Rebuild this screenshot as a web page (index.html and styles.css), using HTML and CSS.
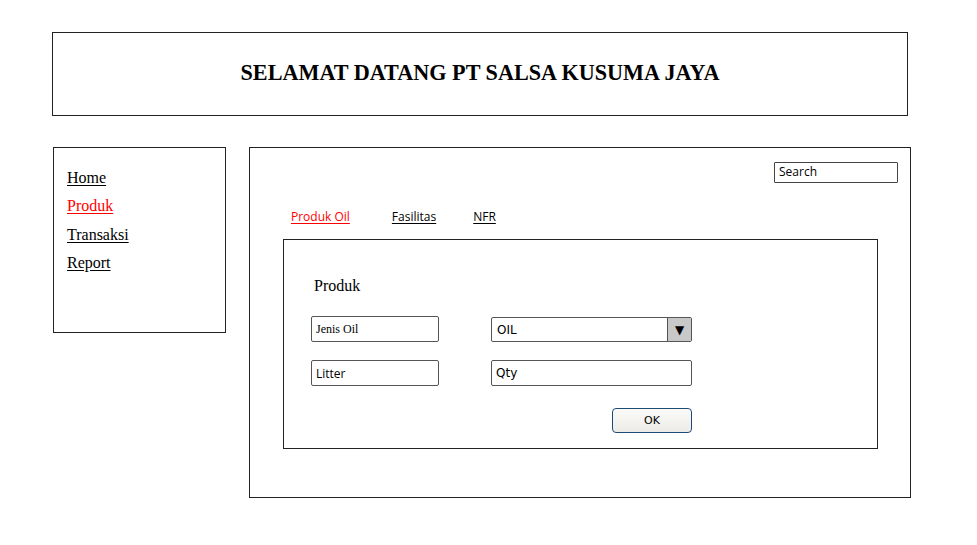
FILE: index.html
```html
<!DOCTYPE html>
<html>
<head>
<meta charset="utf-8">
<link rel="stylesheet" href="styles.css">
</head>
<body>
<div class="page">
  <header class="banner">
    <h1>SELAMAT DATANG PT SALSA KUSUMA JAYA</h1>
  </header>
  <div class="row">
    <nav class="sidebar">
      <a href="#" class="nav-link">Home</a>
      <a href="#" class="nav-link active">Produk</a>
      <a href="#" class="nav-link">Transaksi</a>
      <a href="#" class="nav-link">Report</a>
    </nav>
    <main class="main">
      <div class="search-row">
        <div class="search">Search</div>
      </div>
      <div class="tabs">
        <a href="#" class="tab active">Produk Oil</a>
        <a href="#" class="tab">Fasilitas</a>
        <a href="#" class="tab">NFR</a>
      </div>
      <section class="panel">
        <h2 class="panel-title">Produk</h2>
        <div class="form">
          <div class="field serif">Jenis Oil</div>
          <div class="combo">
            <span class="combo-text">OIL</span>
            <span class="combo-btn">&#9660;</span>
          </div>
          <div class="field sketch">Litter</div>
          <div class="field sys">Qty</div>
          <div class="spacer"></div>
          <div class="btn-cell"><button class="ok">OK</button></div>
        </div>
      </section>
    </main>
  </div>
</div>
</body>
</html>
```

FILE: styles.css
```css
* { box-sizing: border-box; }
html, body { margin: 0; padding: 0; background: #fff; }
body { width: 977px; height: 545px; overflow: hidden; }

.page { padding: 32px 0 0 52px; }

.banner {
  width: 856px;
  height: 84px;
  border: 1px solid #222;
  display: flex;
  align-items: center;
  justify-content: center;
}
.banner h1 {
  margin: 0 0 2px 0;
  font-family: "Liberation Serif", serif;
  font-weight: bold;
  font-size: 22.2px;
  color: #000;
}

.row {
  display: flex;
  align-items: flex-start;
  margin-top: 31px;
  gap: 23px;
}

.sidebar {
  margin-left: 1px;
  width: 173px;
  height: 186px;
  border: 1px solid #222;
  padding: 16px 0 0 13px;
  display: flex;
  flex-direction: column;
  align-items: flex-start;
}
.nav-link {
  font-family: "Liberation Serif", serif;
  font-size: 16px;
  line-height: 28.3px;
  color: #000;
  text-decoration: underline;
  text-underline-offset: 2px;
}
.nav-link.active { color: #f00; }

.main {
  width: 662px;
  height: 351px;
  border: 1px solid #222;
  padding: 14px 12px 0 33px;
}
.search-row { display: flex; justify-content: flex-end; }
.search {
  width: 124px;
  height: 21px;
  border: 1.5px solid #444;
  border-radius: 1px;
  font-family: "Open Sans", sans-serif;
  font-size: 12px;
  line-height: 17px;
  padding-left: 4px;
  color: #000;
}

.tabs {
  display: flex;
  margin-top: 22px;
  padding-left: 8px;
  height: 23px;
  align-items: center;
}
.tab {
  font-family: "Open Sans", sans-serif;
  font-size: 12px;
  color: #000;
  text-decoration: underline;
  text-underline-offset: 2px;
  margin-right: 42px;
}
.tab:nth-child(2) { margin-right: 37px; }
.tab.active { color: #f00; }

.panel {
  margin-top: 11px;
  width: 595px;
  height: 210px;
  border: 1px solid #222;
  padding: 36px 0 0 27px;
}
.panel-title {
  margin: 0 0 20px 3px;
  font-family: "Liberation Serif", serif;
  font-weight: normal;
  font-size: 16px;
  line-height: 20px;
  color: #000;
}

.form {
  display: grid;
  grid-template-columns: 128px 201px;
  column-gap: 52px;
  grid-template-rows: 26px 26px 29px;
  row-gap: 18px;
}
.field {
  border: 1.5px solid #555;
  border-radius: 2px;
  display: flex;
  align-items: center;
  padding-left: 4px;
  color: #000;
}
.field.serif { font-family: "Liberation Serif", serif; font-size: 12px; }
.field.sketch { font-family: "Open Sans", sans-serif; font-size: 12px; }
.field.sys { font-family: "DejaVu Sans", sans-serif; font-size: 12px; }

.combo {
  border: 1.5px solid #555;
  border-radius: 2px;
  display: flex;
  align-items: stretch;
  margin-top: 1px;
  height: 25px;
}
.combo-text {
  flex: 1;
  display: flex;
  align-items: center;
  padding-left: 5px;
  font-family: "DejaVu Sans", sans-serif;
  font-size: 12px;
  color: #000;
}
.combo-btn {
  width: 24px;
  background: #c8c8c8;
  border-left: 1.5px solid #555;
  display: flex;
  align-items: center;
  justify-content: center;
  font-size: 12px;
  color: #000;
  font-family: "DejaVu Sans", sans-serif;
}

.btn-cell { display: flex; justify-content: flex-end; align-items: flex-end; }
.ok {
  width: 80px;
  height: 25px;
  border: 1px solid #1d4b78;
  border-radius: 4px;
  background: linear-gradient(#fbfbf9, #ecebe6);
  font-family: "DejaVu Sans", sans-serif;
  font-size: 11px;
  color: #000;
  padding: 0;
}
```
